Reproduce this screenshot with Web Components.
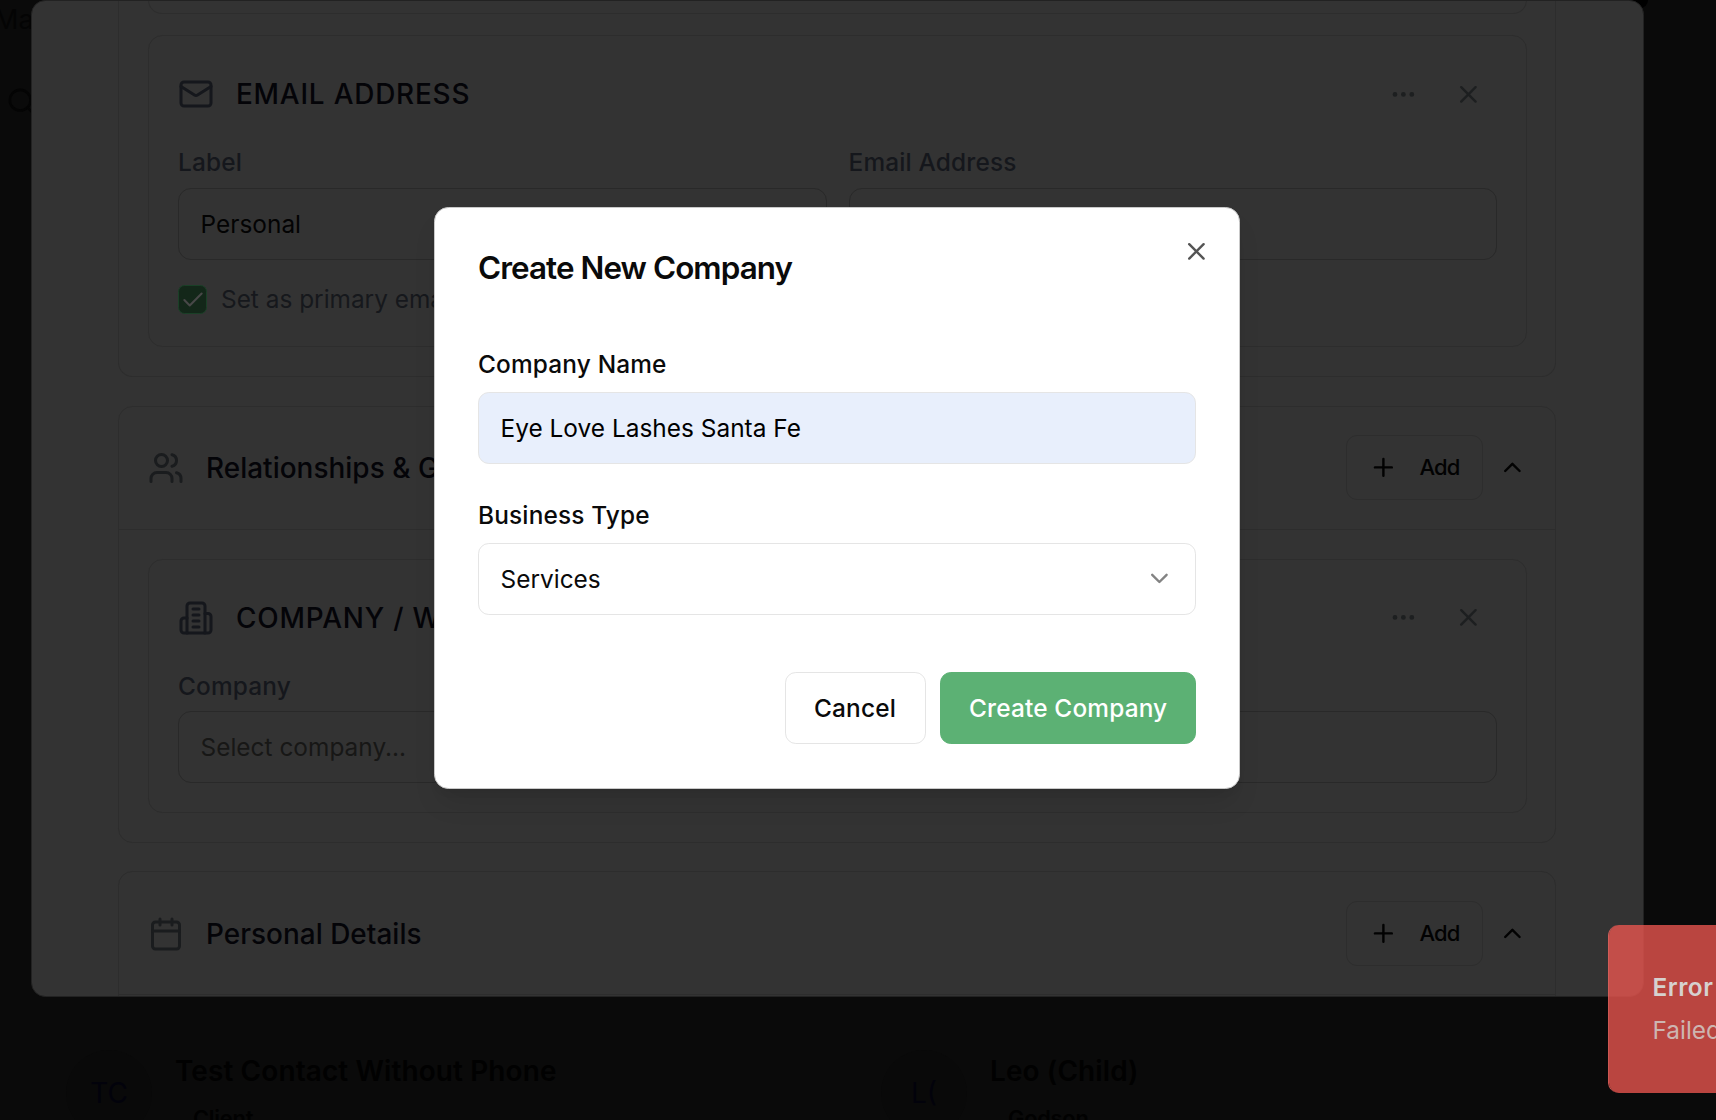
<!DOCTYPE html>
<html lang="en">
<head>
<meta charset="utf-8">
<title>Create New Company</title>
<style>
html, body { margin: 0; height: 100%; }
body { background: #0a0a0a; font-family: Inter, "Liberation Sans", sans-serif; font-size: 24.4px; overflow: hidden; }
</style>
</head>
<body>
<crm-app></crm-app>
<script>
const define = (name, css, html) => {
  customElements.define(name, class extends HTMLElement {
    connectedCallback() {
      if (this.shadowRoot) return;
      const root = this.attachShadow({ mode: 'open' });
      const markup = typeof html === 'function' ? html(this) : html;
      root.innerHTML = `<style>*{box-sizing:border-box}:host{box-sizing:border-box;display:block}${css}</style>${markup}`;
    }
  });
};

const ICONS = {
  mail: '<rect x="2" y="4" width="20" height="16" rx="2"/><path d="m22 7-8.97 5.7a1.94 1.94 0 0 1-2.06 0L2 7"/>',
  users: '<path d="M16 21v-2a4 4 0 0 0-4-4H6a4 4 0 0 0-4 4v2"/><circle cx="9" cy="7" r="4"/><path d="M22 21v-2a4 4 0 0 0-3-3.87"/><path d="M16 3.13a4 4 0 0 1 0 7.75"/>',
  building: '<path d="M6 22V4a2 2 0 0 1 2-2h8a2 2 0 0 1 2 2v18Z"/><path d="M6 12H4a2 2 0 0 0-2 2v6a2 2 0 0 0 2 2h2"/><path d="M18 9h2a2 2 0 0 1 2 2v9a2 2 0 0 1-2 2h-2"/><path d="M10 6h4"/><path d="M10 10h4"/><path d="M10 14h4"/><path d="M10 18h4"/>',
  calendar: '<path d="M8 2v4"/><path d="M16 2v4"/><rect x="3" y="4" width="18" height="18" rx="2"/><path d="M3 10h18"/>',
  more: '<circle cx="12" cy="12" r="1"/><circle cx="19" cy="12" r="1"/><circle cx="5" cy="12" r="1"/>',
  close: '<path d="M18 6 6 18"/><path d="m6 6 12 12"/>',
  plus: '<path d="M5 12h14"/><path d="M12 5v14"/>',
  up: '<path d="m18 15-6-6-6 6"/>',
  down: '<path d="m6 9 6 6 6-6"/>',
  check: '<path d="M20 6 9 17l-5-5"/>',
  search: '<circle cx="11" cy="11" r="8"/><path d="m21 21-4.3-4.3"/>'
};

define('ui-icon', `:host{flex:none;line-height:0}svg{display:block;fill:none;stroke:currentColor;stroke-linecap:round;stroke-linejoin:round}`,
  el => {
    const s = el.getAttribute('size') || 28.8;
    return `<svg width="${s}" height="${s}" viewBox="0 0 24 24" stroke-width="${el.getAttribute('stroke') || 2}">${ICONS[el.getAttribute('name')]}</svg>`;
  });

define('contact-row', `
  :host{display:flex;width:815px;align-items:flex-start;gap:23px}
  .avatar{width:86px;height:86px;margin-top:1px;border-radius:50%;background:#090909;color:#02020b;display:flex;align-items:center;justify-content:center;font-size:28px}
  .info{padding-top:4px;color:#010101;font-weight:600;font-size:27.9px;line-height:36px;letter-spacing:.14px;white-space:nowrap}
  .tag{display:block;padding-left:18px;margin-top:11px;font-size:21.8px;letter-spacing:-.2px}`,
  el => `<div class="avatar">${el.getAttribute('initials')}</div><div class="info"><slot></slot><span class="tag">${el.getAttribute('tag')}</span></div>`);

define('contacts-page', `
  :host{position:absolute;inset:0;overflow:hidden;color:#040404}
  .top{height:40px;display:flex;justify-content:space-between}
  .crumb{margin-left:-6px;font-size:27px;line-height:39px}
  .chip{width:60px;height:8px;margin-right:68px;border-radius:0 0 9px 9px;background:#000}
  .find{height:1009px;padding:46px 0 0 6px}
  .row{display:flex;padding-left:66px}`,
  `<div class="top"><div class="crumb">Ma</div><div class="chip"></div></div>
   <div class="find"><ui-icon name="search" size="31"></ui-icon></div>
   <div class="row"><contact-row initials="TC" tag="Client">Test Contact Without Phone</contact-row><contact-row initials="L(" tag="Godson">Leo (Child)</contact-row></div>`);

define('ui-field', `
  :host{flex:1;min-width:0}
  label{display:block;line-height:36px;font-weight:480;letter-spacing:.17px;color:var(--label,#15171c)}
  .box{height:72px;margin-top:var(--gap,8px);padding:0 21px 0 21.5px;border:1px solid var(--line,#292929);border-radius:var(--radius,13px);background:var(--fill,transparent);display:flex;align-items:center;justify-content:space-between;letter-spacing:.02px;color:var(--value,#030303)}
  ui-icon{color:#838383;margin-top:-1px}`,
  el => `<label>${el.getAttribute('label')}</label><div class="box"><span><slot></slot></span>${el.hasAttribute('select') ? '<ui-icon name="down"></ui-icon>' : ''}</div>`);

define('ui-check', `
  :host{display:flex;align-items:center;gap:14px;height:29px;color:#16181c;white-space:nowrap}
  .mark{width:29px;height:29px;border-radius:6.5px;background:#132719;border:1.8px solid #1a4027;color:#484848;display:flex;align-items:center;justify-content:center}
  .text{line-height:28px;margin-top:-2px}`,
  `<span class="mark"><ui-icon name="check" size="26" stroke="1.9"></ui-icon></span><span class="text"><slot></slot></span>`);

define('form-card', `
  :host{border:1px solid #2d2d2d;border-radius:14.4px;padding:var(--top,40px) 29px 0}
  header{display:flex;align-items:center;height:36px;margin-bottom:32px;color:#15171c}
  h3{margin:0 auto 0 22px;font-size:27.9px;font-weight:480;letter-spacing:.8px;color:#040408;white-space:nowrap}
  .act{display:flex;gap:36.3px;margin:var(--act,0) 14px 0 0;color:#1d1f20}`,
  el => `<header><ui-icon name="${el.getAttribute('icon')}" size="36"></ui-icon><h3>${el.getAttribute('heading')}</h3><div class="act"><ui-icon name="more"></ui-icon><ui-icon name="close"></ui-icon></div></header><slot></slot>`);

define('form-section', `
  :host{border:1px solid #2d2d2d;border-radius:14.4px;width:1438px}
  header{height:123px;padding:var(--top,29px) 28px 0 29px;border-bottom:1px solid #2d2d2d;display:flex;align-items:flex-start;color:#1a1c1e}
  .lead{display:flex;align-items:center;height:65px;gap:22px;margin-right:auto}
  h2{margin:0;font-size:27.9px;font-weight:480;letter-spacing:.04px;color:#040408;white-space:nowrap}
  .add{width:137px;height:65px;border:1px solid #2d2d2d;border-radius:11px;padding:0 0 0 22px;display:flex;align-items:center;gap:21.5px;color:#020202;font-size:22px;font-weight:500;letter-spacing:-.9px}
  .add span{margin-top:-1px}
  .fold{height:65px;display:flex;align-items:center;margin-left:15px;color:#020202}
  .body{padding:29px 28px 29px 29px}`,
  el => `<header><div class="lead"><ui-icon name="${el.getAttribute('icon')}" size="36"></ui-icon><h2>${el.getAttribute('heading')}</h2></div><div class="add"><ui-icon name="plus"></ui-icon><span>Add</span></div><div class="fold"><ui-icon name="up"></ui-icon></div></header><div class="body"><slot></slot></div>`);

define('contact-sheet', `
  :host{position:absolute;left:31px;top:0;width:1613px;height:997px;overflow:hidden;border:1.5px solid #222;border-radius:14.4px;background:#333}
  .col{display:flex;flex-direction:column;gap:28px;padding-left:86px;margin-top:-1px}
  .open{width:1438px;flex:none;height:377px;border:1px solid #2d2d2d;border-top:0;border-radius:0 0 14.4px 14.4px;padding:0 28px 29px 29px;display:flex;flex-direction:column}
  .stub{height:14px;margin-bottom:21px;border:1px solid #2d2d2d;border-top:0;border-radius:0 0 14.4px 14.4px}
  .pair{display:flex;gap:22px;margin-bottom:25px}
  form-section{flex:none}
  .rel{height:437px;margin-top:1px;--top:28px}
  .co{height:254px;--top:40px;--gap:7px;--act:-1.5px}
  .co ui-field{--value:#171716}
  .mail{height:312px;--top:40px}`,
  `<div class="col">
    <div class="open"><div class="stub"></div>
      <form-card class="mail" icon="mail" heading="EMAIL ADDRESS">
        <div class="pair"><ui-field label="Label">Personal</ui-field><ui-field label="Email Address"></ui-field></div>
        <ui-check>Set as primary email</ui-check>
      </form-card></div>
    <form-section class="rel" icon="users" heading="Relationships &amp; Groups">
      <form-card class="co" icon="building" heading="COMPANY / WORK"><ui-field label="Company">Select company...</ui-field></form-card>
    </form-section>
    <form-section icon="calendar" heading="Personal Details"></form-section>
  </div>`);

define('ui-button', `
  :host{height:72px;padding:0 0 0 28px;border:1px solid #e5e5e5;border-radius:10.8px;display:flex;align-items:center;font-weight:480;letter-spacing:.17px;color:#0a0a0a;white-space:nowrap}
  :host([primary]){background:#5cb174;border-color:#5cb174;color:#fff}`, `<slot></slot>`);

define('company-dialog', `
  :host{position:absolute;left:434px;top:207px;width:806px;height:582px;border:1px solid #c9c9c9;border-radius:14.4px;background:#fff;color:#0a0a0a;padding:38px 43px 0;box-shadow:0 18px 27px -5px rgba(0,0,0,.1),0 7px 11px -7px rgba(0,0,0,.1)}
  h1{margin:0;font-size:31.4px;line-height:45px;font-weight:600;letter-spacing:-.93px}
  .head{display:flex;justify-content:space-between;align-items:flex-start;height:100px}
  .head ui-icon{color:#545454;margin:-9px -15px 0 0}
  .form{display:flex;flex-direction:column;gap:33px;--label:#0a0a0a;--line:#e5e5e5;--radius:10.8px;--value:#0a0a0a;--gap:10px}
  .form ui-field{flex:none}
  .auto{--fill:#e8effc;--value:#000}
  .foot{display:flex;justify-content:flex-end;gap:14px;margin-top:57px}
  ui-button{flex:none}
  .c{width:141px}.p{width:256px}`,
  `<div class="head"><h1>Create New Company</h1><ui-icon name="close"></ui-icon></div>
   <div class="form"><ui-field class="auto" label="Company Name">Eye Love Lashes Santa Fe</ui-field><ui-field label="Business Type" select>Services</ui-field></div>
   <div class="foot"><ui-button class="c">Cancel</ui-button><ui-button class="p" primary>Create Company</ui-button></div>`);

define('toast-message', `
  :host{position:absolute;left:1608px;top:925px;width:108px;height:168px;overflow:hidden;border-left:1px solid rgba(239,100,95,.85);border-radius:10.8px 0 0 10.8px;background:rgba(236,86,80,.78);background-clip:padding-box;padding:44px 0 0 43.5px;white-space:nowrap;line-height:36px;color:#cdb5b1}
  b{display:block;font-weight:600;letter-spacing:.5px;color:#d6d1cf;margin-bottom:7px}`,
  `<b>Error</b><span>Failed</span>`);

define('crm-app', `:host{position:relative;width:1716px;height:1120px;overflow:hidden;background:#0a0a0a}`,
  `<contacts-page></contacts-page><contact-sheet></contact-sheet><company-dialog></company-dialog><toast-message></toast-message>`);
</script>
</body>
</html>
